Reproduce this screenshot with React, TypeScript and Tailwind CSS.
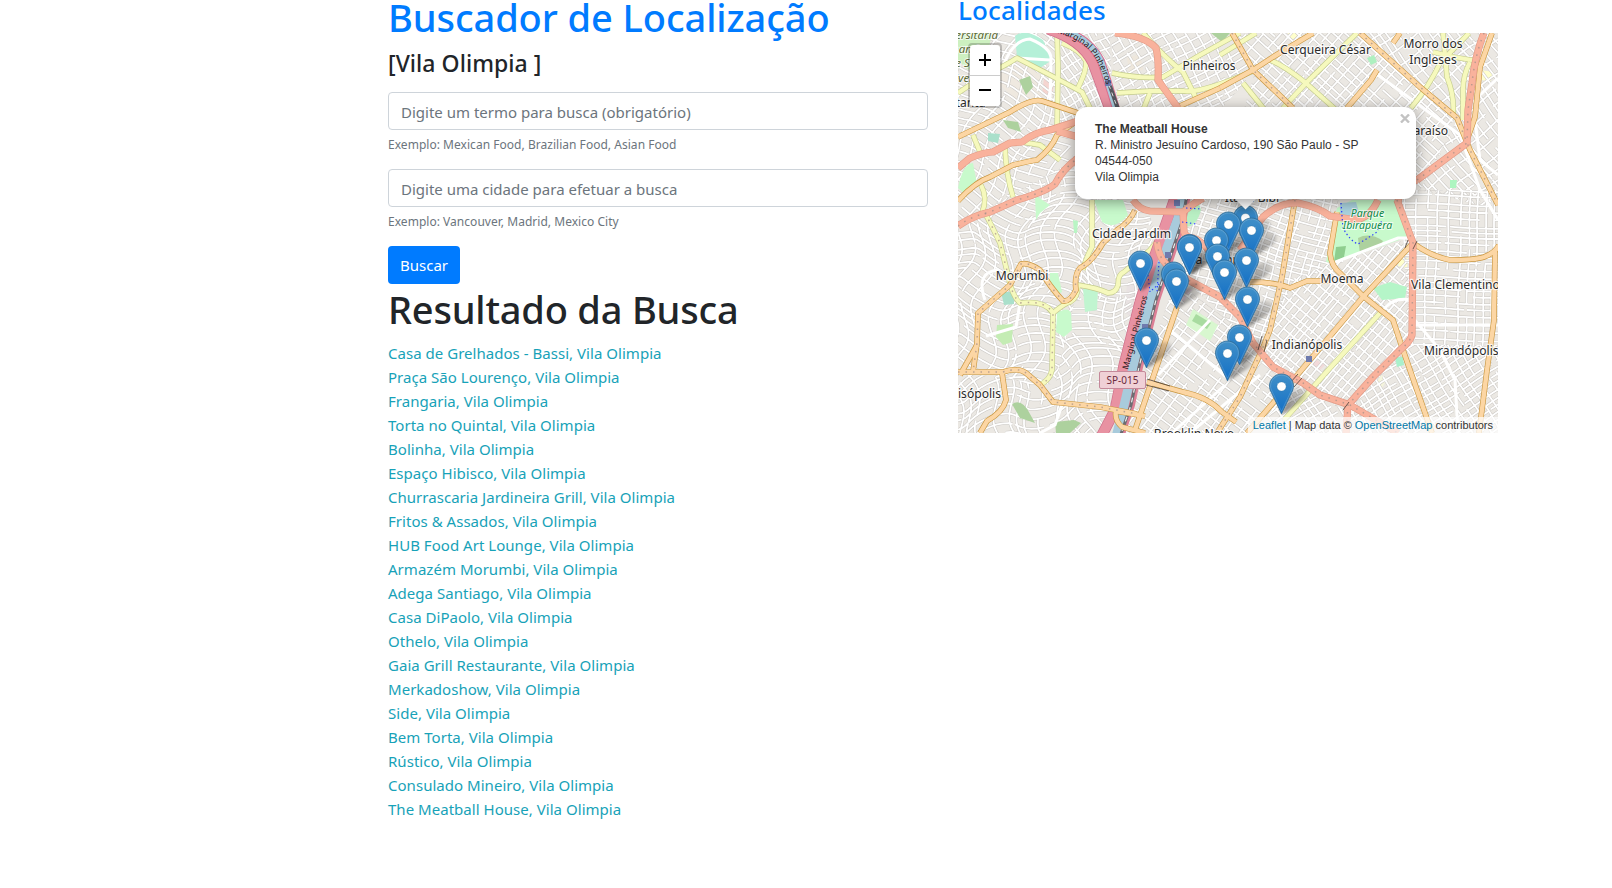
import React from "react";

type Pt = [number, number];

const results = [
  "Casa de Grelhados - Bassi",
  "Praça São Lourenço",
  "Frangaria",
  "Torta no Quintal",
  "Bolinha",
  "Espaço Hibisco",
  "Churrascaria Jardineira Grill",
  "Fritos & Assados",
  "HUB Food Art Lounge",
  "Armazém Morumbi",
  "Adega Santiago",
  "Casa DiPaolo",
  "Othelo",
  "Gaia Grill Restaurante",
  "Merkadoshow",
  "Side",
  "Bem Torta",
  "Rústico",
  "Consulado Mineiro",
  "The Meatball House",
];

/* ---------- map geometry (viewBox 958 33 540 400) ---------- */

function makeRandom(seed: number) {
  let s = seed;
  return () => {
    s = (s * 1664525 + 1013904223) % 4294967296;
    return s / 4294967296;
  };
}

interface District {
  id: string;
  area: string;
  center: Pt;
  radius: number;
  angle: number;
  gapA: number;
  gapB: number;
  warp: number;
  seed: number;
}

const districts: District[] = [
  { id: "d1", area: "958,33 1060,33 1060,110 1075,160 958,225", center: [1008, 125], radius: 125, angle: 28, gapA: 8, gapB: 12, warp: 4, seed: 3 },
  { id: "d2", area: "1060,33 1110,33 1112,110 1062,130", center: [1085, 75], radius: 65, angle: 62, gapA: 7, gapB: 11, warp: 2, seed: 5 },
  { id: "d3", area: "1110,33 1232,33 1255,72 1220,110 1118,110", center: [1175, 75], radius: 85, angle: -28, gapA: 8, gapB: 11, warp: 1, seed: 9 },
  { id: "d4", area: "1232,33 1362,33 1458,118 1420,190 1220,190 1255,72", center: [1330, 110], radius: 140, angle: 42, gapA: 8, gapB: 10, warp: 0, seed: 11 },
  { id: "d5", area: "1362,33 1498,33 1498,210 1420,190 1458,118", center: [1440, 110], radius: 110, angle: 52, gapA: 8, gapB: 12, warp: 1.5, seed: 15 },
  { id: "d6", area: "958,225 1075,160 1140,190 1155,230 1135,300 1075,300 1055,385 958,372", center: [1050, 285], radius: 140, angle: 12, gapA: 8, gapB: 14, warp: 8, seed: 21 },
  { id: "d7", area: "958,372 1055,385 1075,300 1140,295 1110,433 958,433", center: [1040, 370], radius: 120, angle: -14, gapA: 8, gapB: 13, warp: 7, seed: 26 },
  { id: "d8", area: "1185,190 1340,190 1330,265 1290,290 1260,350 1190,285 1170,230", center: [1250, 260], radius: 110, angle: 17, gapA: 7, gapB: 9, warp: 1, seed: 31 },
  { id: "d9", area: "1175,280 1260,345 1300,385 1250,433 1125,433", center: [1200, 365], radius: 110, angle: 37, gapA: 8, gapB: 11, warp: 0, seed: 38 },
  { id: "d10", area: "1290,280 1333,262 1412,238 1413,345 1345,410 1300,385 1258,350", center: [1340, 320], radius: 105, angle: -50, gapA: 6.5, gapB: 9, warp: 0, seed: 41 },
  { id: "d11", area: "1400,190 1498,190 1498,350 1410,345", center: [1450, 270], radius: 105, angle: 2, gapA: 7, gapB: 10, warp: 0.6, seed: 47 },
  { id: "d12", area: "1250,433 1300,385 1345,410 1410,345 1498,345 1498,433", center: [1400, 390], radius: 125, angle: -32, gapA: 7, gapB: 9, warp: 1, seed: 53 },
];

function streetPath(d: District) {
  const rnd = makeRandom(d.seed);
  const rad = (d.angle * Math.PI) / 180;
  const cos = Math.cos(rad);
  const sin = Math.sin(rad);
  const place = (u: number, v: number) => {
    const wu = u + d.warp * Math.sin(v / 13 + d.seed) + d.warp * 0.5 * Math.sin(u / 9);
    const wv = v + d.warp * Math.sin(u / 15 + d.seed * 2);
    const x = d.center[0] + wu * cos - wv * sin;
    const y = d.center[1] + wu * sin + wv * cos;
    return `${x.toFixed(1)} ${y.toFixed(1)}`;
  };
  const parts: string[] = [];
  const sweep = (gap: number, flip: boolean) => {
    for (let a = -d.radius; a < d.radius; a += gap * (0.7 + rnd() * 0.6)) {
      let b = -d.radius;
      while (b < d.radius) {
        const end = Math.min(d.radius, b + 20 + rnd() * 90);
        const pts: string[] = [];
        for (let t = b; t <= end; t += 5) pts.push(flip ? place(a, t) : place(t, a));
        parts.push("M" + pts.join("L"));
        b = end + (rnd() < 0.5 ? 0 : rnd() * 14);
      }
    }
  };
  sweep(d.gapA, false);
  sweep(d.gapB, true);
  return parts.join("");
}

const streets = districts.map((d) => ({ ...d, path: streetPath(d) }));

const yellowRoads = [
  "M958 93L985 75Q1005 66 1017 58L1050 75L1082 92L1090 108",
  "M1057 33L1058 67L1057 131",
  "M1062 43Q1080 50 1086 61Q1087 70 1078 88",
  "M1112 73Q1140 79 1163 77L1200 55L1240 33",
  "M1117 93L1150 91L1183 91Q1200 94 1253 71",
  "M1143 33Q1165 58 1183 72L1197 100",
  "M1143 110L1150 93",
  "M1220 55L1256 33",
  "M1357 33L1307 82L1283 108",
  "M1270 60Q1285 66 1307 84L1335 109",
  "M1243 83L1264 109",
  "M1469 33L1440 63Q1430 85 1411 108",
  "M1443 33L1447 77Q1455 97 1453 116",
  "M1470 62Q1463 75 1463 90L1463 120",
  "M1433 52Q1455 58 1477 61",
  "M973 135L980 152",
  "M1022 142L1040 145L1060 160",
  "M1005 147Q1006 175 1013 197",
  "M981 185Q988 198 982 213",
  "M985 213Q993 228 1000 243L1008 275Q1012 296 1020 303Q1045 300 1053 313L1052 370Q1050 380 1040 385",
  "M1092 200L1092 247Q1085 260 1083 270",
  "M1053 313Q1065 303 1070 302Q1078 298 1078 285Q1098 288 1108 293Q1116 293 1118 285Q1118 274 1124 272L1150 250Q1160 238 1164 232",
  "M1380 313L1330 368L1284 420",
];

const orangeRoads = [
  "M958 137L1010 112Q1032 98 1042 101L1078 113",
  "M958 201Q975 182 990 177L1013 165Q1030 161 1037 160Q1052 148 1057 135L1078 120",
  "M1135 210Q1130 222 1117 230L1103 243Q1092 262 1080 268Q1074 275 1076 290Q1070 302 1063 301Q1050 287 1040 270Q1028 262 1021 264L1010 285L978 313L977 343L973 372",
  "M977 345L960 375",
  "M958 372L1003 372Q1018 367 1026 373L1040 385L1053 402L1100 407L1137 414",
  "M1002 373L1006 400Q1003 412 987 421L980 433",
  "M1177 307L1160 357L1135 430",
  "M1147 382L1183 392Q1208 397 1222 412L1236 422",
  "M1115 411L1145 416",
  "M1116 411Q1114 420 1122 427L1145 433",
  "M1232 33L1253 70L1293 108",
  "M1220 88L1253 70L1273 57L1313 33",
  "M1180 106L1220 88",
  "M1360 33L1420 87L1457 118L1470 150L1498 205",
  "M1492 33L1480 67L1475 117L1467 140",
  "M1377 70L1371 80L1347 108",
  "M1400 33L1393 43",
  "M1295 200L1289 235L1282 277L1270 330L1262 350L1240 397L1217 433",
  "M1250 282Q1275 282 1290 288Q1300 284 1307 281L1330 281",
  "M1337 212L1330 253Q1331 266 1340 273L1363 296L1393 320L1403 350L1432 433",
  "M1413 243L1363 297L1293 380L1247 433",
  "M1413 243Q1430 256 1450 260Q1475 260 1484 257Q1495 253 1499 245",
  "M1495 250L1494 320L1487 370L1479 433",
];

const salmonRoads = [
  "M1115 33Q1145 36 1156 48Q1159 60 1158 80L1178 108",
  "M958 168L970 158Q985 152 993 152L1010 143L1022 142Q1035 132 1050 130L1078 121",
  "M1057 131L1078 137",
  "M958 226Q972 216 990 212L1017 200Q1045 192 1055 184Q1062 170 1078 158",
  "M1133 200Q1140 210 1150 211L1183 212Q1192 204 1203 198",
  "M1183 212L1184 232Q1186 238 1193 238Q1206 242 1214 260",
  "M1157 242Q1158 258 1170 268L1190 281L1220 297L1240 317L1253 343L1273 367L1303 383L1320 395L1350 405L1398 433",
  "M1240 250L1263 217Q1280 202 1298 203Q1318 207 1330 216L1350 219Q1368 222 1378 200",
  "M1397 200L1413 243L1412 335Q1410 342 1400 350L1373 377L1348 405L1346 433",
  "M1417 180L1467 143L1468 110L1472 83Q1475 55 1484 33",
  "M1417 180Q1400 185 1398 202",
];

const parks = [
  { d: "M1337 208L1352 200L1398 200L1411 236L1333 263L1326 262Z", fill: "#c8facc" },
  { d: "M958 188Q963 163 973 163L977 184L966 195Z", fill: "#c8facc" },
  { d: "M1094 200L1123 200L1128 215Q1115 231 1102 222Z", fill: "#c8facc" },
  { d: "M1057 313Q1068 306 1071 313L1072 330L1064 337L1056 332Z", fill: "#c8facc" },
  { d: "M1050 273L1058 273L1062 292L1055 296L1050 285Z", fill: "#c8facc" },
  { d: "M1083 289L1098 288L1097 310L1085 312Z", fill: "#c0f5d0" },
  { d: "M1184 205Q1198 195 1201 210Q1196 229 1184 226Z", fill: "#b9f0c4" },
  { d: "M1015 36Q1025 28 1043 40L1052 60L1040 68L1017 57Z", fill: "#b5f0d8" },
  { d: "M958 33L992 33L988 52L968 70L958 60Z", fill: "#cdf0c0" },
  { d: "M1019 80L1030 76L1033 87L1026 95Z", fill: "#add19e" },
  { d: "M1003 120L1018 122L1021 132L1008 128Z", fill: "#add19e" },
  { d: "M1012 404Q1022 398 1030 414L1035 423L1020 418Z", fill: "#add19e" },
  { d: "M1055 422L1074 420L1081 423L1070 433L1056 433Z", fill: "#add19e" },
  { d: "M997 325L1013 324L1012 342L1003 345L996 337Z", fill: "#c4ecb4" },
  { d: "M1001 292L1014 292L1014 304L1004 305Z", fill: "#aae0cb" },
  { d: "M988 133L1000 134L998 143L988 141Z", fill: "#aae0cb" },
  { d: "M1193 309L1218 325L1210 341L1186 325Z", fill: "#d8f7cf" },
  { d: "M1358 238Q1370 232 1383 241L1380 246L1360 254Z", fill: "#add19e" },
  { d: "M1336 247L1346 246L1344 257L1334 262Z", fill: "#8fce8f" },
  { d: "M1373 288L1390 282L1407 287L1405 298L1382 300Z", fill: "#b5f5c8" },
  { d: "M1211 33L1230 33L1222 42Z", fill: "#add19e" },
  { d: "M1367 58L1374 55L1377 62L1371 65Z", fill: "#aef0c0" },
  { d: "M1395 357L1403 357L1404 365L1397 367Z", fill: "#aaf0cb" },
  { d: "M1035 195L1050 205L1040 213L1036 220Z", fill: "#c8facc" },
  { d: "M1450 180L1457 180L1456 188L1450 188Z", fill: "#aef5c0" },
  { d: "M1073 220L1078 221L1077 233L1074 233Z", fill: "#b9f5c4" },
];

const plots = [
  { d: "M1002 65L1020 60L1040 75L1042 100L1022 105L1000 85Z", fill: "#efe9e0" },
  { d: "M1044 78L1054 85L1052 95L1042 94Z", fill: "#f5d5d0" },
  { d: "M1127 285Q1137 274 1144 285L1138 322L1124 312Z", fill: "#e8e2e2" },
  { d: "M1288 33L1302 33L1292 40Z", fill: "#ffffcc" },
  { d: "M1315 359L1325 365L1320 370L1312 364Z", fill: "#f2dada" },
  { d: "M1381 375L1387 379L1382 388L1376 384Z", fill: "#f5f5dc" },
  { d: "M1400 258L1408 258L1407 268L1398 266Z", fill: "#ffffcc" },
  { d: "M1480 70L1494 72L1490 82L1482 80Z", fill: "#ffffcc" },
  { d: "M1180 285L1192 290L1182 304L1172 298Z", fill: "#ebdbe8" },
  { d: "M1127 58L1140 54L1143 70L1129 73Z", fill: "#eee7dc" },
];

interface Label {
  x: number;
  y: number;
  text: string;
  anchor?: "start" | "middle" | "end";
}

const labels: Label[] = [
  { x: 1209, y: 70, text: "Pinheiros", anchor: "middle" },
  { x: 1325.5, y: 54, text: "Cerqueira César", anchor: "middle" },
  { x: 1433, y: 48, text: "Morro dos", anchor: "middle" },
  { x: 1433, y: 64, text: "Ingleses", anchor: "middle" },
  { x: 1448, y: 135, text: "Paraíso", anchor: "end" },
  { x: 1131.5, y: 238, text: "Cidade Jardim", anchor: "middle" },
  { x: 1022, y: 279.5, text: "Morumbi", anchor: "middle" },
  { x: 1342, y: 283, text: "Moema", anchor: "middle" },
  { x: 1411, y: 289, text: "Vila Clementino", anchor: "start" },
  { x: 1307, y: 349, text: "Indianópolis", anchor: "middle" },
  { x: 1424, y: 354.5, text: "Mirandópolis", anchor: "start" },
  { x: 1001, y: 398, text: "Paraisópolis", anchor: "end" },
  { x: 985.5, y: 107, text: "Butantã", anchor: "end" },
  { x: 1194, y: 437.5, text: "Brooklin Novo", anchor: "middle" },
  { x: 1252, y: 202, text: "Itaim Bibi", anchor: "middle" },
  { x: 1216, y: 263.5, text: "Vila Olímpia", anchor: "middle" },
];

const pins: Pt[] = [
  [1245.5, 218],
  [1228.5, 224.5],
  [1251.5, 230.5],
  [1216.5, 240.5],
  [1189.5, 247],
  [1189.5, 247.5],
  [1217.5, 256.5],
  [1246.5, 260.5],
  [1140.5, 263.5],
  [1224.5, 272.5],
  [1173.5, 274.5],
  [1176.5, 281.5],
  [1247.5, 299.5],
  [1239.5, 337.5],
  [1146.5, 340.5],
  [1227.5, 353.5],
  [1281.5, 386.5],
];

function Pin({ at }: { at: Pt }) {
  return (
    <g transform={`translate(${at[0] - 12.5} ${at[1] - 13})`}>
      <path
        d="M12.5 .5C5.9 .5 .5 5.9 .5 12.4c0 2.4.8 4.7 1.9 6.7L12.5 40.3 22.6 19.1c1.1-2 1.9-4.3 1.9-6.7C24.5 5.9 19.1 .5 12.5 .5z"
        fill="url(#pinFill)"
        stroke="#2e6c97"
        strokeWidth="0.8"
      />
      <path
        d="M12.5 1.6C6.5 1.6 1.6 6.5 1.6 12.4c0 2.1.7 4.2 1.8 6.2L12.5 37.8 21.6 18.6c1.1-2 1.8-4.1 1.8-6.2C23.4 6.5 18.5 1.6 12.5 1.6z"
        fill="none"
        stroke="#ffffff"
        strokeOpacity="0.16"
        strokeWidth="1"
      />
      <circle cx="12.5" cy="13" r="4.6" fill="#fff" stroke="#2e6c97" strokeOpacity="0.5" strokeWidth="0.7" />
    </g>
  );
}

function RoadSet({ roads, casing, fill, width }: { roads: string[]; casing: string; fill: string; width: number }) {
  return (
    <g fill="none" strokeLinejoin="round">
      {roads.map((d) => (
        <path key={"c" + d} d={d} stroke={casing} strokeWidth={width + 1.2} />
      ))}
      {roads.map((d) => (
        <path key={"f" + d} d={d} stroke={fill} strokeWidth={width} />
      ))}
    </g>
  );
}

const marginalNorth = "M1048 29Q1082 40 1093 63Q1100 82 1111 112";
const riverNorth = "M1060 29Q1090 38 1101 61Q1108 82 1117 112";
const marginalSouth = "M1176 195L1169 215L1155 255L1140 302L1124 365L1115 410L1101 437";
const riverSouth = "M1183 195L1178 218L1165 253L1150 302L1133 367L1123 410L1116 437";
const railSouth = "M1187 195L1182 222L1170 258L1156 300L1139 367L1131 405L1120 437";

function MapDrawing() {
  return (
    <svg className="block" width="540" height="400" viewBox="958 33 540 400">
      <defs>
        <linearGradient id="pinFill" x1="0" y1="0" x2="0" y2="1">
          <stop offset="0" stopColor="#4190c8" />
          <stop offset="1" stopColor="#126fc6" />
        </linearGradient>
        <linearGradient id="shade" x1="0" y1="1" x2="0.8" y2="0">
          <stop offset="0" stopColor="#000" stopOpacity="0.5" />
          <stop offset="1" stopColor="#000" stopOpacity="0.12" />
        </linearGradient>
        <filter id="soft" x="-30%" y="-30%" width="160%" height="160%">
          <feGaussianBlur stdDeviation="1.6" />
        </filter>
        <path id="labelNorth" d="M1057 33Q1086 41 1096 60Q1102 70 1109 92" />
        <path id="labelSouth" d="M1128 370L1141 322L1152 280" />
        {streets.map((s) => (
          <clipPath key={s.id} id={s.id}>
            <polygon points={s.area} />
          </clipPath>
        ))}
      </defs>
      <rect x="958" y="33" width="540" height="400" fill="#ebe8e3" />
      {plots.map((p) => (
        <path key={p.d} d={p.d} fill={p.fill} />
      ))}
      {streets.map((s) => (
        <g key={s.id} clipPath={`url(#${s.id})`} fill="none">
          <path d={s.path} stroke="#c9c6c2" strokeWidth="2.8" />
          <path d={s.path} stroke="#fff" strokeWidth="1.8" />
        </g>
      ))}
      {parks.map((p) => (
        <path key={p.d} d={p.d} fill={p.fill} />
      ))}
      <path d="M1340 203L1356 202L1360 216L1348 222L1340 215Z" fill="#aad3df" />
      <path d="M1196 314L1211 323L1207 329L1192 321Z" fill="#a8dba0" />
      <g fill="none" stroke="#fff" strokeWidth="3">
        <path d="M1333 263L1398 238L1411 238" />
        <path d="M1004 64Q1013 40 1030 39Q1052 48 1051 60L1050 100M1017 58L1050 60" />
        <path d="M1382 312Q1392 296 1412 300" />
        <path d="M1413 318L1440 350L1455 380L1458 433M1412 325L1498 325" />
        <path d="M1475 120L1480 160L1498 175M1480 95L1498 78" />
        <path d="M1378 75L1460 135L1480 190L1498 220" />
        <path d="M985 300Q975 272 998 270M1020 303L1016 327L986 336" />
        <path d="M1062 405L1055 425L1040 433" />
        <path d="M1170 330L1230 380M1158 375L1210 320M1225 385L1172 433M1190 433L1260 375" />
      </g>
      <RoadSet roads={yellowRoads} casing="#c3cb8c" fill="#f6f9bd" width={4.2} />
      <path d={marginalNorth} fill="none" stroke="#cf6f8a" strokeWidth="11" />
      <path d={marginalNorth} fill="none" stroke="#e892a2" strokeWidth="9.5" />
      <path d={riverNorth} fill="none" stroke="#dc6c8c" strokeWidth="8" />
      <path d={riverNorth} fill="none" stroke="#a8cbdc" strokeWidth="6" />
      <path d={marginalSouth} fill="none" stroke="#d0708c" strokeWidth="11" />
      <path d={marginalSouth} fill="none" stroke="#e892a2" strokeWidth="9.6" />
      <path d={railSouth} fill="none" stroke="#dc7f95" strokeWidth="8" />
      <path d={riverSouth} fill="none" stroke="#a8cbdc" strokeWidth="9" />
      <path d={railSouth} fill="none" stroke="#6d6d72" strokeWidth="3" />
      <path d={railSouth} fill="none" stroke="#eee" strokeWidth="1.2" strokeDasharray="5 5" />
      <path d="M1110 86L1119 112" fill="none" stroke="#55565c" strokeWidth="4" />
      <path d="M1109 85L1119 112" fill="none" stroke="#ddd" strokeWidth="1" strokeDasharray="4 4" />
      <RoadSet roads={orangeRoads} casing="#c9963f" fill="#fcd6a4" width={4.4} />
      <RoadSet roads={salmonRoads} casing="#e29a86" fill="#f9b29c" width={6} />
      <g fill="none" stroke="#a7928a" strokeOpacity="0.75" strokeWidth="1.5" strokeDasharray="1.5 6">
        <path d={orangeRoads[13]} />
        <path d={orangeRoads[17]} />
        <path d={orangeRoads[10]} />
        <path d={orangeRoads[4]} />
        <path d={orangeRoads[2]} />
        <path d={yellowRoads[19]} />
        <path d={salmonRoads[3]} />
        <path d={salmonRoads[6]} />
        <path d={salmonRoads[8]} />
        <path d={salmonRoads[9]} />
      </g>
      <g fill="none" stroke="#4a3f38" strokeWidth="0.8">
        <path d="M1147 379L1170 386M1146 385L1169 391" />
        <path d="M1258 350L1262 336M1264 352L1267 340M1343 410L1349 402" />
        <path d="M1408 240L1405 248M1417 241L1413 249" />
        <path d="M1290 383L1298 374M1294 387L1302 378" />
      </g>
      <path
        d="M1341 203L1343 228Q1350 241 1358 244Q1368 238 1377 232L1382 220"
        fill="none"
        stroke="#2a3cff"
        strokeWidth="1.2"
        strokeDasharray="1.4 2.6"
      />
      <path
        d="M1186 208L1201 209M1182 222L1196 224M1148 275L1150 292M1159 262L1157 292M1152 290L1160 283"
        fill="none"
        stroke="#2a3cff"
        strokeWidth="1.1"
        strokeDasharray="1.4 2.6"
      />
      <g fill="#6f7bae">
        <rect x="1105" y="80" width="6" height="6" />
        <rect x="1165" y="252" width="6" height="6" />
        <rect x="1174" y="200" width="6" height="6" />
        <rect x="1142" y="324" width="6" height="6" />
        <rect x="1306" y="356" width="6" height="6" />
      </g>

      <g
        fontFamily='"Noto Sans", sans-serif'
        fontSize="12.1"
        fill="#2b2b2b"
        stroke="#fff"
        strokeOpacity="0.75"
        strokeWidth="2.4"
        strokeLinejoin="round"
        paintOrder="stroke"
      >
        {labels.map((l) => (
          <text key={l.text} x={l.x} y={l.y} textAnchor={l.anchor}>
            {l.text}
          </text>
        ))}
      </g>
      <g
        fontFamily='"Noto Sans", sans-serif'
        fontSize="11.5"
        fontStyle="italic"
        fill="#5d6b35"
        stroke="#fff"
        strokeOpacity="0.7"
        strokeWidth="2"
        paintOrder="stroke"
        textAnchor="end"
      >
        <text x="998" y="39">Universitária</text>
        <text x="985" y="53">Armando</text>
        <text x="993" y="67">de Salles</text>
        <text x="983" y="82">Oliveira</text>
      </g>
      <g
        fontFamily='"Noto Sans", sans-serif'
        fontSize="10.5"
        fontStyle="italic"
        fill="#0f8a48"
        stroke="#fff"
        strokeOpacity="0.7"
        strokeWidth="2"
        paintOrder="stroke"
        textAnchor="middle"
      >
        <text x="1367.5" y="217">Parque</text>
        <text x="1367.5" y="229">Ibirapuera</text>
      </g>
      <g fontFamily='"Noto Sans", sans-serif' fontSize="8.6" fill="#2a1a20">
        <text>
          <textPath href="#labelNorth">Marginal Pinheiros</textPath>
        </text>
        <text>
          <textPath href="#labelSouth">Marginal Pinheiros</textPath>
        </text>
      </g>
      <rect x="1099.5" y="371.5" width="46" height="17" rx="1.5" fill="#f0d0d6" stroke="#c5899a" />
      <text x="1122.5" y="384" fontFamily='"Noto Sans", sans-serif' fontSize="10" fill="#6b2a3c" textAnchor="middle">
        SP-015
      </text>

      {pins.map((p, i) => (
        <path
          key={"s" + i}
          d="M0 0L8 -19Q14 -29 23 -26Q29 -20 20 -13Z"
          transform={`translate(${p[0]} ${p[1] + 28})`}
          fill="url(#shade)"
          filter="url(#soft)"
        />
      ))}
      {pins.map((p, i) => (
        <Pin key={i} at={p} />
      ))}
    </svg>
  );
}

function Field({ id, placeholder, hint }: { id: string; placeholder: string; hint: string }) {
  return (
    <div className="mb-4">
      <input
        id={id}
        placeholder={placeholder}
        className="block h-[38px] w-full rounded border border-[#ced4da] px-3 pt-0.5 text-[15px] placeholder:text-[#6c757d] placeholder:opacity-100"
      />
      <p className="mt-[5px] h-[18px] text-[12px] leading-[19px] tracking-[0.03px] text-[#6c757d]">{hint}</p>
    </div>
  );
}

export default function App() {
  return (
    <div className="h-[888px] w-[1612px] overflow-hidden bg-white font-['Noto_Sans',sans-serif] text-[#212529]">
      <div className="flex gap-[30px] pl-[388px]">
        <div className="w-[540px]">
          <h1 className="-mt-[7px] mb-2 h-12 whitespace-nowrap text-[38px] font-medium leading-[48px] tracking-[-0.08px] text-[#007bff]">
            Buscador de Localização
          </h1>
          <h4 className="mb-[14px] h-[29px] whitespace-pre text-[23px] font-medium leading-[29px] tracking-[0.05px]">
            [Vila Olimpia ]
          </h4>
          <form onSubmit={(e) => e.preventDefault()}>
            <Field id="term" placeholder="Digite um termo para busca (obrigatório)" hint="Exemplo: Mexican Food, Brazilian Food, Asian Food" />
            <Field id="city" placeholder="Digite uma cidade para efetuar a busca" hint="Exemplo: Vancouver, Madrid, Mexico City" />
            <button className="block h-[38px] w-[72px] rounded bg-[#007bff] text-[15px] text-white">Buscar</button>
          </form>
          <h1 className="mb-2 mt-px h-12 whitespace-nowrap text-[38px] font-medium leading-[48px] tracking-[-0.2px]">
            Resultado da Busca
          </h1>
          <ul>
            {results.map((name) => (
              <li key={name} className="h-6 whitespace-nowrap text-[15px] leading-[24px] tracking-[0.03px] text-[#17a2b8]">
                {name}, Vila Olimpia
              </li>
            ))}
          </ul>
        </div>
        <div className="w-[540px]">
          <h3 className="-mt-[7px] mb-[7px] h-[33px] text-[26px] font-medium leading-[34px] tracking-[0.16px] text-[#007bff]">
            Localidades
          </h3>
          <div className="relative h-[400px] w-[540px] overflow-hidden font-['Liberation_Sans',sans-serif]">
            <MapDrawing />
            <div className="absolute left-2.5 top-2.5 w-[34px] rounded border-2 border-black/20 bg-clip-padding">
              <button className="flex h-[31px] w-[30px] items-center justify-center rounded-t-sm border-b border-[#ccc] bg-white">
                <svg width="12" height="12" viewBox="0 0 12 12" stroke="#000" strokeWidth="2">
                  <path d="M6 0V12M0 6H12" />
                </svg>
              </button>
              <button className="flex h-[30px] w-[30px] items-center justify-center rounded-b-sm bg-white">
                <svg width="12" height="12" viewBox="0 0 12 12" stroke="#000" strokeWidth="2">
                  <path d="M0 5H12" />
                </svg>
              </button>
            </div>
            <div className="absolute left-[279px] top-[156px] size-[17px] rotate-45 bg-white shadow-[0_3px_14px_rgba(0,0,0,0.4)]" />
            <div className="absolute left-[117px] top-[74px] h-[92px] w-[341px] rounded-xl bg-white pl-5 pt-3.5 text-xs leading-4 text-[#333] shadow-[0_3px_14px_rgba(0,0,0,0.4)]">
              <p className="font-bold">The Meatball House</p>
              <p>R. Ministro Jesuíno Cardoso, 190 São Paulo - SP</p>
              <p>04544-050</p>
              <p>Vila Olimpia</p>
              <svg className="absolute right-[6px] top-[7px]" width="10" height="9" viewBox="0 0 10 9" stroke="#c3c3c3" strokeWidth="2.4">
                <path d="M1 .5L9 8.5M9 .5L1 8.5" />
              </svg>
            </div>
            <div className="absolute bottom-0 right-0 bg-white/70 px-[5px] text-[11px] leading-4 text-[#333]">
              <span className="text-[#0078a8]">Leaflet</span> | Map data © <span className="text-[#0078a8]">OpenStreetMap</span> contributors
            </div>
          </div>
        </div>
      </div>
    </div>
  );
}
